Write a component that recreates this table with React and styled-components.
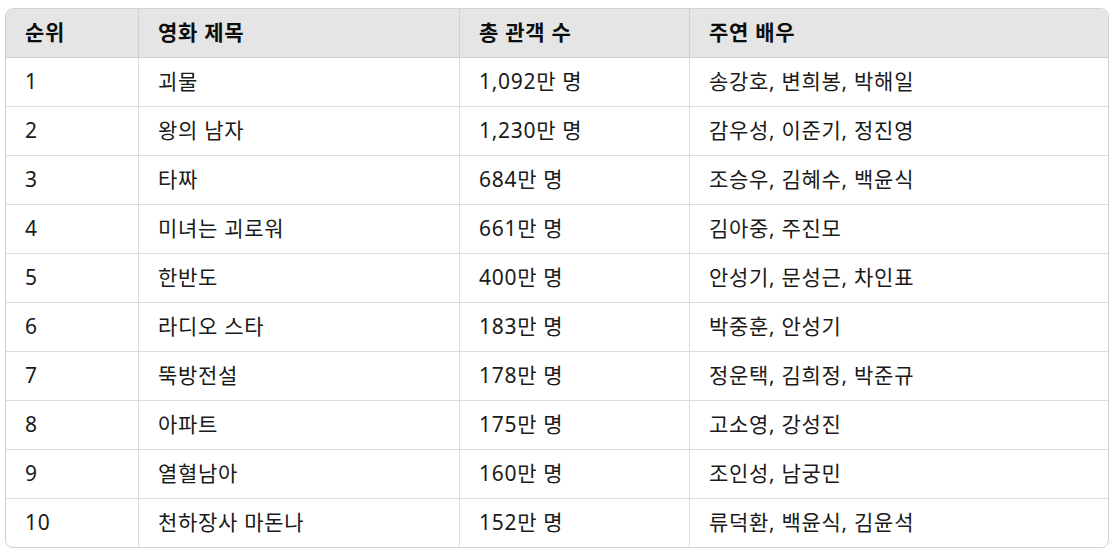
import styled, { createGlobalStyle } from 'styled-components';

const GlobalStyle = createGlobalStyle`
  body {
    margin: 0;
    background: #ffffff;
    font-family: 'Noto Sans', 'Noto Sans CJK KR', sans-serif;
    color: #0d0d0d;
  }
`;

const Page = styled.div`
  padding: 8px 10px 8px 5px;
`;

const Table = styled.table`
  width: 1104px;
  table-layout: fixed;
  border-collapse: separate;
  border-spacing: 0;
  border: 1px solid #d2d2d2;
  border-radius: 8px;
  overflow: hidden;
  font-size: 21px;
  line-height: 1.2;
  letter-spacing: 0.7px;
`;

const Head = styled.th`
  background: #e5e5e5;
  height: 48px;
  padding: 0 19px;
  text-align: left;
  font-weight: 700;
  border-bottom: 1px solid #cfcfcf;
  border-left: ${(p) => (p.first ? 'none' : '1px solid #cfcfcf')};
`;

const Cell = styled.td`
  height: 48px;
  padding: 0 19px;
  font-weight: 400;
  color: #1a1a1a;
  border-top: ${(p) => (p.top ? 'none' : '1px solid #dcdcdc')};
  border-left: ${(p) => (p.first ? 'none' : '1px solid #dcdcdc')};
`;

const columns = [
  { title: '순위', width: 132 },
  { title: '영화 제목', width: 321 },
  { title: '총 관객 수', width: 230 },
  { title: '주연 배우', width: 419 },
];

const movies = [
  ['1', '괴물', '1,092만 명', '송강호, 변희봉, 박해일'],
  ['2', '왕의 남자', '1,230만 명', '감우성, 이준기, 정진영'],
  ['3', '타짜', '684만 명', '조승우, 김혜수, 백윤식'],
  ['4', '미녀는 괴로워', '661만 명', '김아중, 주진모'],
  ['5', '한반도', '400만 명', '안성기, 문성근, 차인표'],
  ['6', '라디오 스타', '183만 명', '박중훈, 안성기'],
  ['7', '뚝방전설', '178만 명', '정운택, 김희정, 박준규'],
  ['8', '아파트', '175만 명', '고소영, 강성진'],
  ['9', '열혈남아', '160만 명', '조인성, 남궁민'],
  ['10', '천하장사 마돈나', '152만 명', '류덕환, 백윤식, 김윤석'],
];

export default function App() {
  return (
    <Page>
      <GlobalStyle />
      <Table>
        <colgroup>
          {columns.map((c) => (
            <col key={c.title} style={{ width: c.width }} />
          ))}
        </colgroup>
        <thead>
          <tr>
            {columns.map((c, i) => (
              <Head key={c.title} first={i === 0}>
                {c.title}
              </Head>
            ))}
          </tr>
        </thead>
        <tbody>
          {movies.map((row, r) => (
            <tr key={row[0]}>
              {row.map((value, i) => (
                <Cell key={i} first={i === 0} top={r === 0}>
                  {value}
                </Cell>
              ))}
            </tr>
          ))}
        </tbody>
      </Table>
    </Page>
  );
}
